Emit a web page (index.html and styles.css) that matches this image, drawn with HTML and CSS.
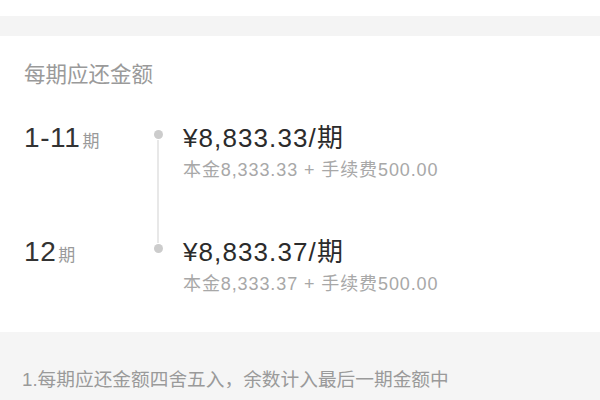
FILE: index.html
```html
<!DOCTYPE html>
<html lang="zh-CN">

<head>
    <meta charset="UTF-8">
    <meta name="viewport" content="width=device-width, initial-scale=1.0">
    <link rel="stylesheet" href="styles.css">
    <title>每期应还金额</title>
</head>

<body>

    <div class="top-strip"></div>
    <div class="spacer"></div>

    <div class="plan-card">
        <div class="plan-title">每期应还金额</div>

        <div class="plan-row first">
            <div class="term">1-11<span class="term-unit">期</span></div>
            <div class="rail"><span class="dot"></span></div>
            <div class="amounts">
                <div class="amount">¥8,833.33/期</div>
                <div class="detail">本金8,333.33 + 手续费500.00</div>
            </div>
        </div>

        <div class="plan-row last">
            <div class="term">12<span class="term-unit">期</span></div>
            <div class="rail"><span class="dot"></span></div>
            <div class="amounts">
                <div class="amount">¥8,833.37/期</div>
                <div class="detail">本金8,333.37 + 手续费500.00</div>
            </div>
        </div>
    </div>

    <div class="notes">
        <p>1.每期应还金额四舍五入，余数计入最后一期金额中</p>
    </div>

</body>

</html>
```

FILE: styles.css
```css
body {
    font-family: 'Liberation Sans', 'Noto Sans CJK SC', sans-serif;
    background-color: #f5f5f5;
    margin: 0;
    padding: 0;
}

.top-strip {
    height: 16px;
    background-color: #ffffff;
}

.spacer {
    height: 20px;
    background-color: #f4f4f4;
}

.plan-card {
    background-color: #ffffff;
    padding: 25px 24px 35px 24px;
}

.plan-title {
    font-size: 21.5px;
    line-height: 28px;
    color: #9a9a9a;
    margin-bottom: 32px;
}

.plan-row {
    display: flex;
    align-items: stretch;
}

.plan-row.first .amounts {
    padding-bottom: 52px;
}

.term {
    width: 122px;
    font-size: 28px;
    line-height: 34px;
    letter-spacing: 0.6px;
    color: #333333;
}

.term-unit {
    font-size: 17px;
    letter-spacing: 0;
    color: #9a9a9a;
    margin-left: 2px;
}

.rail {
    width: 24px;
    display: flex;
    flex-direction: column;
    align-items: center;
}

/* line above / below the dot */
.rail::before,
.rail::after {
    content: '';
    width: 2px;
    background-color: #e8e8e8;
}

.rail::before {
    height: 8px;
    margin-bottom: 1px;
}

.rail::after {
    flex: 1;
    margin-top: 1px;
}

.plan-row.first .rail::before {
    visibility: hidden;
}

.plan-row.last .rail::after {
    visibility: hidden;
}

.dot {
    width: 9px;
    height: 9px;
    border-radius: 50%;
    background-color: #cccccc;
}

.amounts {
    margin-left: 13px;
}

.amount {
    font-size: 26px;
    line-height: 34px;
    letter-spacing: 1.1px;
    color: #2b2b2b;
}

.detail {
    font-size: 18px;
    line-height: 26px;
    letter-spacing: 0.9px;
    margin-top: 2px;
    color: #a8a8a8;
}

.notes {
    padding: 34px 22px 20px 22px;
}

.notes p {
    margin: 0;
    font-size: 18.7px;
    line-height: 28px;
    color: #9a9a9a;
}
```
